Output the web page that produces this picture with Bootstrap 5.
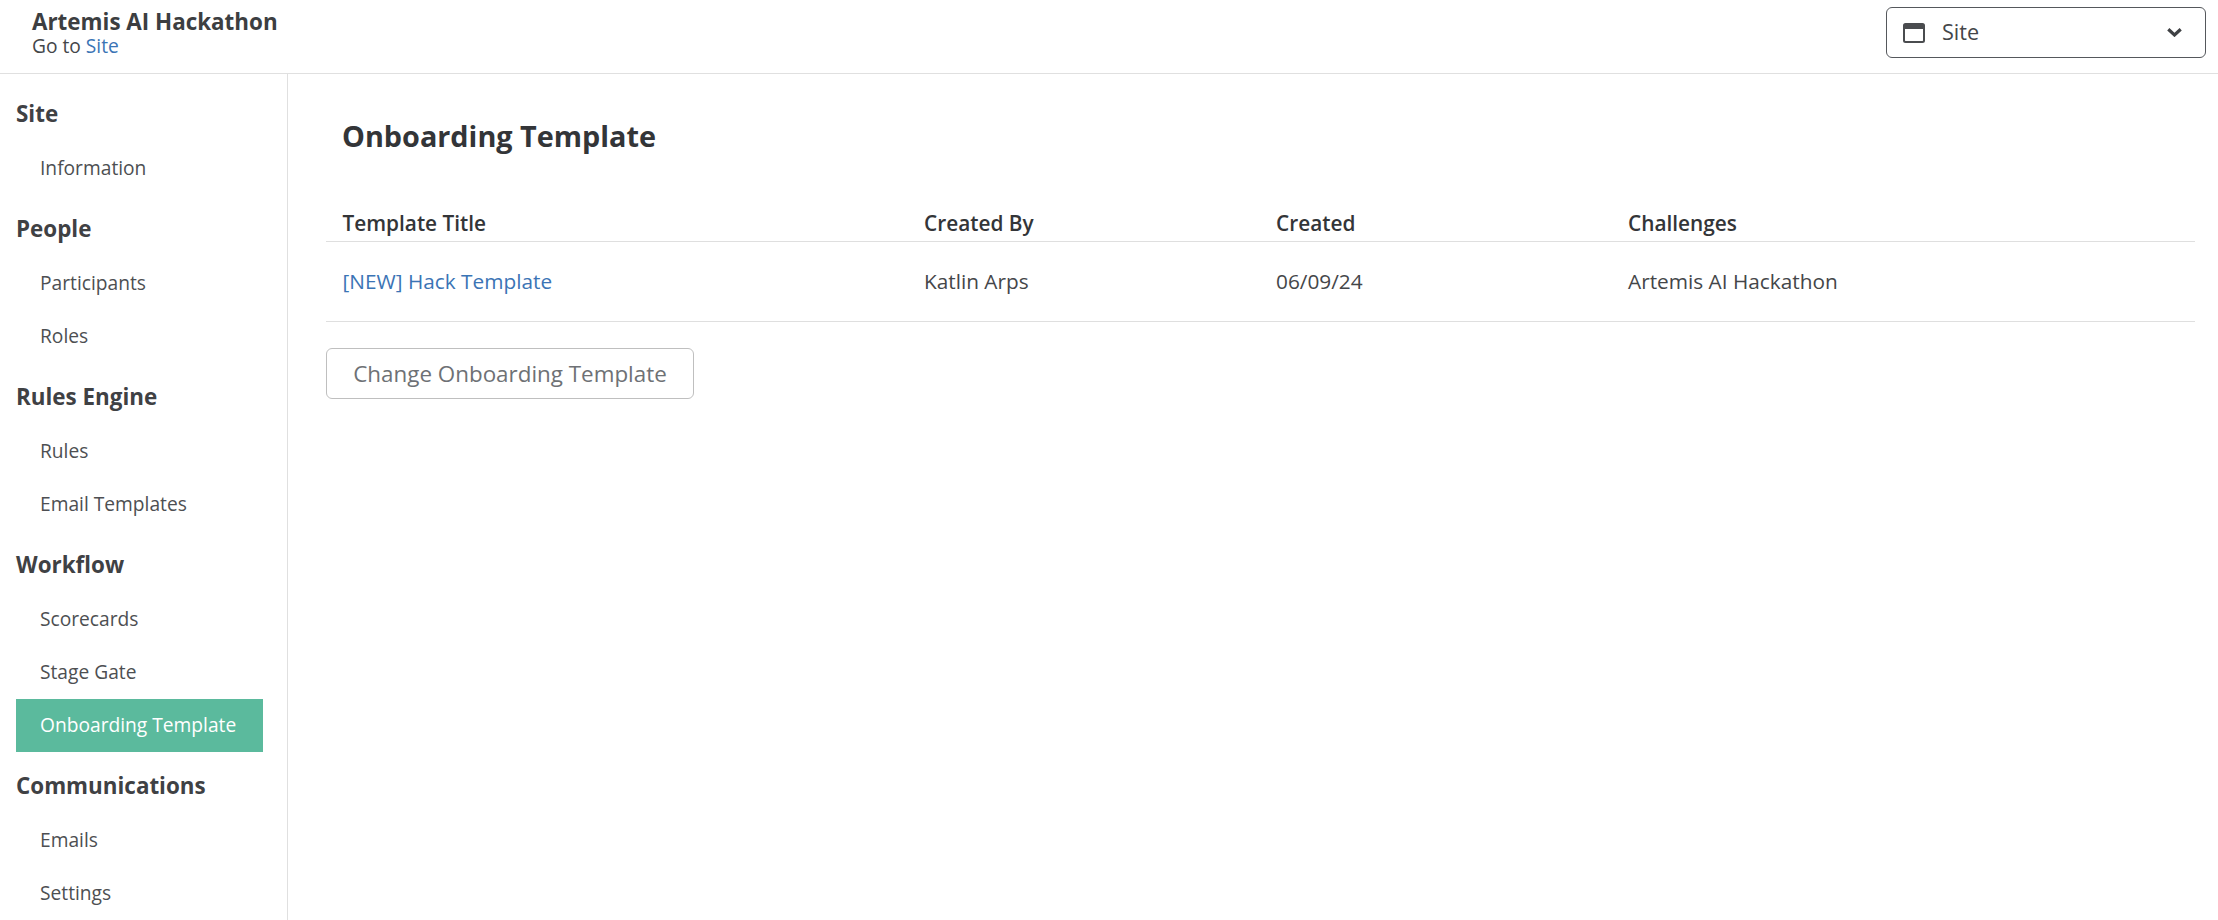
<!DOCTYPE html>
<html lang="en">
<head>
<meta charset="utf-8">
<title>Onboarding Template</title>
<link href="https://cdn.jsdelivr.net/npm/bootstrap@5.3.0/dist/css/bootstrap.min.css" rel="stylesheet">
<style>
html,body{height:100%;}
body{font-family:"Open Sans","Liberation Sans",sans-serif;color:#444649;background:#fff;overflow:hidden;}
a{text-decoration:none;color:#3b74b5;}
.top-bar{height:74px;border-bottom:1px solid #e0e0e0;padding:7px 12px 0 32px;}
.site-name{font-size:22.4px;font-weight:700;line-height:27px;color:#3c3e41;margin-top:1px;}
.go-to{font-size:19.2px;line-height:22px;color:#444649;}
.section-select{width:320px;height:51px;border:1px solid #55585c;border-radius:6px;padding:0 23px 0 16px;background:#fff;color:#444649;font-size:21.6px;}
.section-select svg.win{margin-right:17px;}
.main-row{height:846px;}
.side-nav{width:288px;flex:none;border-right:1px solid #e0e0e0;padding:5.800px 24px 0 16px;overflow:hidden;}
.side-head{font-size:22.4px;font-weight:700;color:#3f4144;line-height:30px;padding:19px 0 13.4px;}
.side-link{display:block;font-size:19.2px;line-height:28.8px;padding:12px 24px;color:#4d4f52;white-space:nowrap;}
.side-link.current{background:#5bba9d;color:#fff;}
.content-pane{padding:0 23px 0 38px;}
.page-title{font-size:28.8px;font-weight:700;color:#333538;line-height:38px;margin:43px 0 55px 16px;}
.tpl-table{width:100%;table-layout:fixed;margin:0;--bs-table-color:#444649;--bs-table-border-color:#dfdfdf;}
.tpl-table th{font-size:20.8px;font-weight:600;color:#333538;line-height:26px;padding:0 17px 5px;border-bottom:1px solid #dfdfdf;}
.tpl-table td{font-size:20.8px;line-height:31px;padding:24px 17px;border-bottom:1px solid #dfdfdf;}
.tpl-table th:first-child,.tpl-table td:first-child{padding-left:16.500px;}
.col-a{width:581px;}.col-b,.col-c{width:352px;}
.change-btn{margin-top:26px;height:51px;width:368px;padding:0;border:1px solid #bfbfbf;border-radius:6px;background:#fff;color:#6e7175;font-size:22.4px;}
</style>
</head>
<body>
<header class="top-bar d-flex align-items-start justify-content-between">
  <div>
    <div class="site-name">Artemis AI Hackathon</div>
    <div class="go-to">Go to <a href="#">Site</a></div>
  </div>
  <button type="button" class="section-select d-flex align-items-center">
    <svg class="win" width="22" height="20" viewBox="0 0 22 20" aria-hidden="true"><path fill="#4a4c4f" fill-rule="evenodd" d="M2.500 0h17A2.500 2.500 0 0 1 22 2.500v15a2.500 2.500 0 0 1-2.500 2.500h-17A2.500 2.500 0 0 1 0 17.500v-15A2.500 2.500 0 0 1 2.500 0zM2 6v11.500c0 .3.200.5.500.5h17c.3 0 .5-.2.5-.5V6z"/></svg>
    <span>Site</span>
    <svg class="ms-auto" width="15" height="9" viewBox="0 0 15 9" aria-hidden="true"><path fill="none" stroke="#3f4144" stroke-width="3.200" d="M1.300 1.300 7.500 7l6.200-5.700"/></svg>
  </button>
</header>
<div class="main-row d-flex">
  <nav class="side-nav">
    <div class="side-head">Site</div>
    <a class="side-link" href="#">Information</a>
    <div class="side-head">People</div>
    <a class="side-link" href="#">Participants</a>
    <a class="side-link" href="#">Roles</a>
    <div class="side-head">Rules Engine</div>
    <a class="side-link" href="#">Rules</a>
    <a class="side-link" href="#">Email Templates</a>
    <div class="side-head">Workflow</div>
    <a class="side-link" href="#">Scorecards</a>
    <a class="side-link" href="#">Stage Gate</a>
    <a class="side-link current" href="#">Onboarding Template</a>
    <div class="side-head">Communications</div>
    <a class="side-link" href="#">Emails</a>
    <a class="side-link" href="#">Settings</a>
  </nav>
  <main class="content-pane flex-grow-1">
    <h1 class="page-title">Onboarding Template</h1>
    <table class="table tpl-table">
      <thead><tr><th class="col-a">Template Title</th><th class="col-b">Created By</th><th class="col-c">Created</th><th>Challenges</th></tr></thead>
      <tbody><tr><td><a href="#">[NEW] Hack Template</a></td><td>Katlin Arps</td><td>06/09/24</td><td>Artemis AI Hackathon</td></tr></tbody>
    </table>
    <button type="button" class="btn change-btn">Change Onboarding Template</button>
  </main>
</div>
</body>
</html>
